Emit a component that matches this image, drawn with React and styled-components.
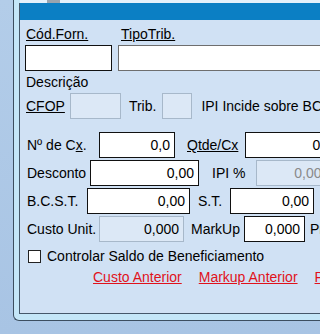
import React from 'react'
import styled, {createGlobalStyle} from 'styled-components'

const Global = createGlobalStyle`
  html, body { margin:0; padding:0; }
  body { font-family: "Liberation Sans", Arial, sans-serif; }
`

export default function App() {
  return (
    <Screen>
      <Global/>
      <Frame>
        <TopStrip><Chip/></TopStrip>
        <Panel>
          <Band/>
          <Body>
            <LabelRow>
              <Label $w={95}><u>Cód.Forn.</u></Label>
              <Label><u>TipoTrib.</u></Label>
            </LabelRow>
            <Row>
              <Field $w={87} />
              <Field $w={210} $ml={6} $tone="gray" />
            </Row>
            <Plain>Descrição</Plain>
            <Row>
              <Link>CFOP</Link>
              <Field $w={51} $ml={5} $off />
              <Text $ml={8}>Trib.</Text>
              <Field $w={30} $ml={6} $off />
              <Text $ml={9}>IPI Incide sobre BC</Text>
            </Row>
            <Grid>
              <Row>
                <Text $w={74}>Nº de C<u>x</u>.</Text>
                <Field $w={76}>0,0</Field>
                <Link $ml={11}>Qtde/Cx</Link>
                <Field $w={80} $ml={7}>0</Field>
              </Row>
              <Row>
                <Text $w={65}>Desconto</Text>
                <Field $w={109}>0,00</Field>
                <Text $ml={13}>IPI %</Text>
                <Field $w={70} $ml={11} $off $muted>0,00</Field>
              </Row>
              <Row>
                <Text $w={62}>B.C.S.T.</Text>
                <Field $w={103}>0,00</Field>
                <Text $ml={8}>S.T.</Text>
                <Field $w={84} $ml={8}>0,00</Field>
              </Row>
              <Row>
                <Text $w={74}>Custo Unit.</Text>
                <Field $w={85} $off>0,000</Field>
                <Text $ml={7}>MarkUp</Text>
                <Field $w={61} $ml={4}>0,000</Field>
                <Text $ml={5}>Preço</Text>
              </Row>
            </Grid>
            <CheckRow>
              <Box/>
              <Text $ml={6}>Controlar Saldo de Beneficiamento</Text>
            </CheckRow>
            <Links>
              <Red>Custo Anterior</Red>
              <Red>Markup Anterior</Red>
              <Red>Preço Anterior</Red>
            </Links>
          </Body>
        </Panel>
      </Frame>
    </Screen>
  )
}

const Screen = styled.div`
  width:320px;
  height:334px;
  overflow:hidden;
  background:linear-gradient(180deg, #b3cde9 0%, #a8c4e4 100%);
  color:#000;
  font-size:14px;
`
const Frame = styled.div`
  margin-left:13px;
  width:330px;
  height:321px;
  box-sizing:border-box;
  border:1px solid #3c4e60;
  border-top:none;
  border-right:none;
  border-bottom-left-radius:6px;
  background:#c4e6f8;
  padding:0 0 6px 5px;
  display:flex;
  flex-direction:column;
`
const TopStrip = styled.div`
  height:3px;
  display:flex;
  background:#e4f1fb;
  margin-left:1px;
`
const Chip = styled.div`
  width:13px;
  margin-left:27px;
  background:#9aa4ae;
`
const Panel = styled.div`
  flex:1;
  border-left:1px solid #45576a;
  border-bottom:1px solid #45576a;
  background:#d0e1f4;
  display:flex;
  flex-direction:column;
`
const Band = styled.div`
  height:17px;
  background:#0b7fc4;
`
const Body = styled.div`
  padding:3px 0 0 5px;
  display:flex;
  flex-direction:column;
`
const LabelRow = styled.div`
  display:flex;
  height:22px;
  align-items:center;
  padding-left:1px;
`
const Label = styled.span`
  width:${p => p.$w ? p.$w + 'px' : 'auto'};
  flex-shrink:0;
`
const Row = styled.div`
  display:flex;
  align-items:center;
  height:26px;
  white-space:nowrap;
`
const Plain = styled.div`
  height:22px;
  line-height:22px;
  padding-left:1px;
`
const Text = styled.span`
  flex-shrink:0;
  margin-left:${p => (p.$ml || 0) + 'px'};
  width:${p => p.$w ? p.$w + 'px' : 'auto'};
  padding-left:${p => p.$w ? '2px' : '0'};
  box-sizing:border-box;
  white-space:nowrap;
`
const Link = styled(Text)`
  text-decoration:underline;
  padding-left:1px;
`
const Field = styled.div`
  flex-shrink:0;
  box-sizing:border-box;
  width:${p => p.$w}px;
  height:26px;
  margin-left:${p => (p.$ml || 0) + 'px'};
  border:1px solid ${p => p.$off ? '#a7b8ca' : p.$tone === 'gray' ? '#6e6e6e' : '#111'};
  background:${p => p.$off ? '#dce8f6' : '#fff'};
  color:${p => p.$muted ? '#8a8a8a' : '#000'};
  text-align:right;
  padding-right:4px;
  line-height:24px;
  overflow:hidden;
`
const Grid = styled.div`
  margin-top:13px;
  display:flex;
  flex-direction:column;
  gap:2px;
`
const CheckRow = styled.div`
  display:flex;
  align-items:center;
  margin-top:6px;
  padding-left:3px;
  height:16px;
`
const Box = styled.span`
  width:11px;
  height:11px;
  border:1px solid #222;
  background:#fff;
  flex-shrink:0;
`
const Links = styled.div`
  display:flex;
  gap:17px;
  padding-left:68px;
  margin-top:4px;
  height:18px;
  align-items:center;
  white-space:nowrap;
`
const Red = styled.span`
  color:#e0121b;
  text-decoration:underline;
  flex-shrink:0;
`
